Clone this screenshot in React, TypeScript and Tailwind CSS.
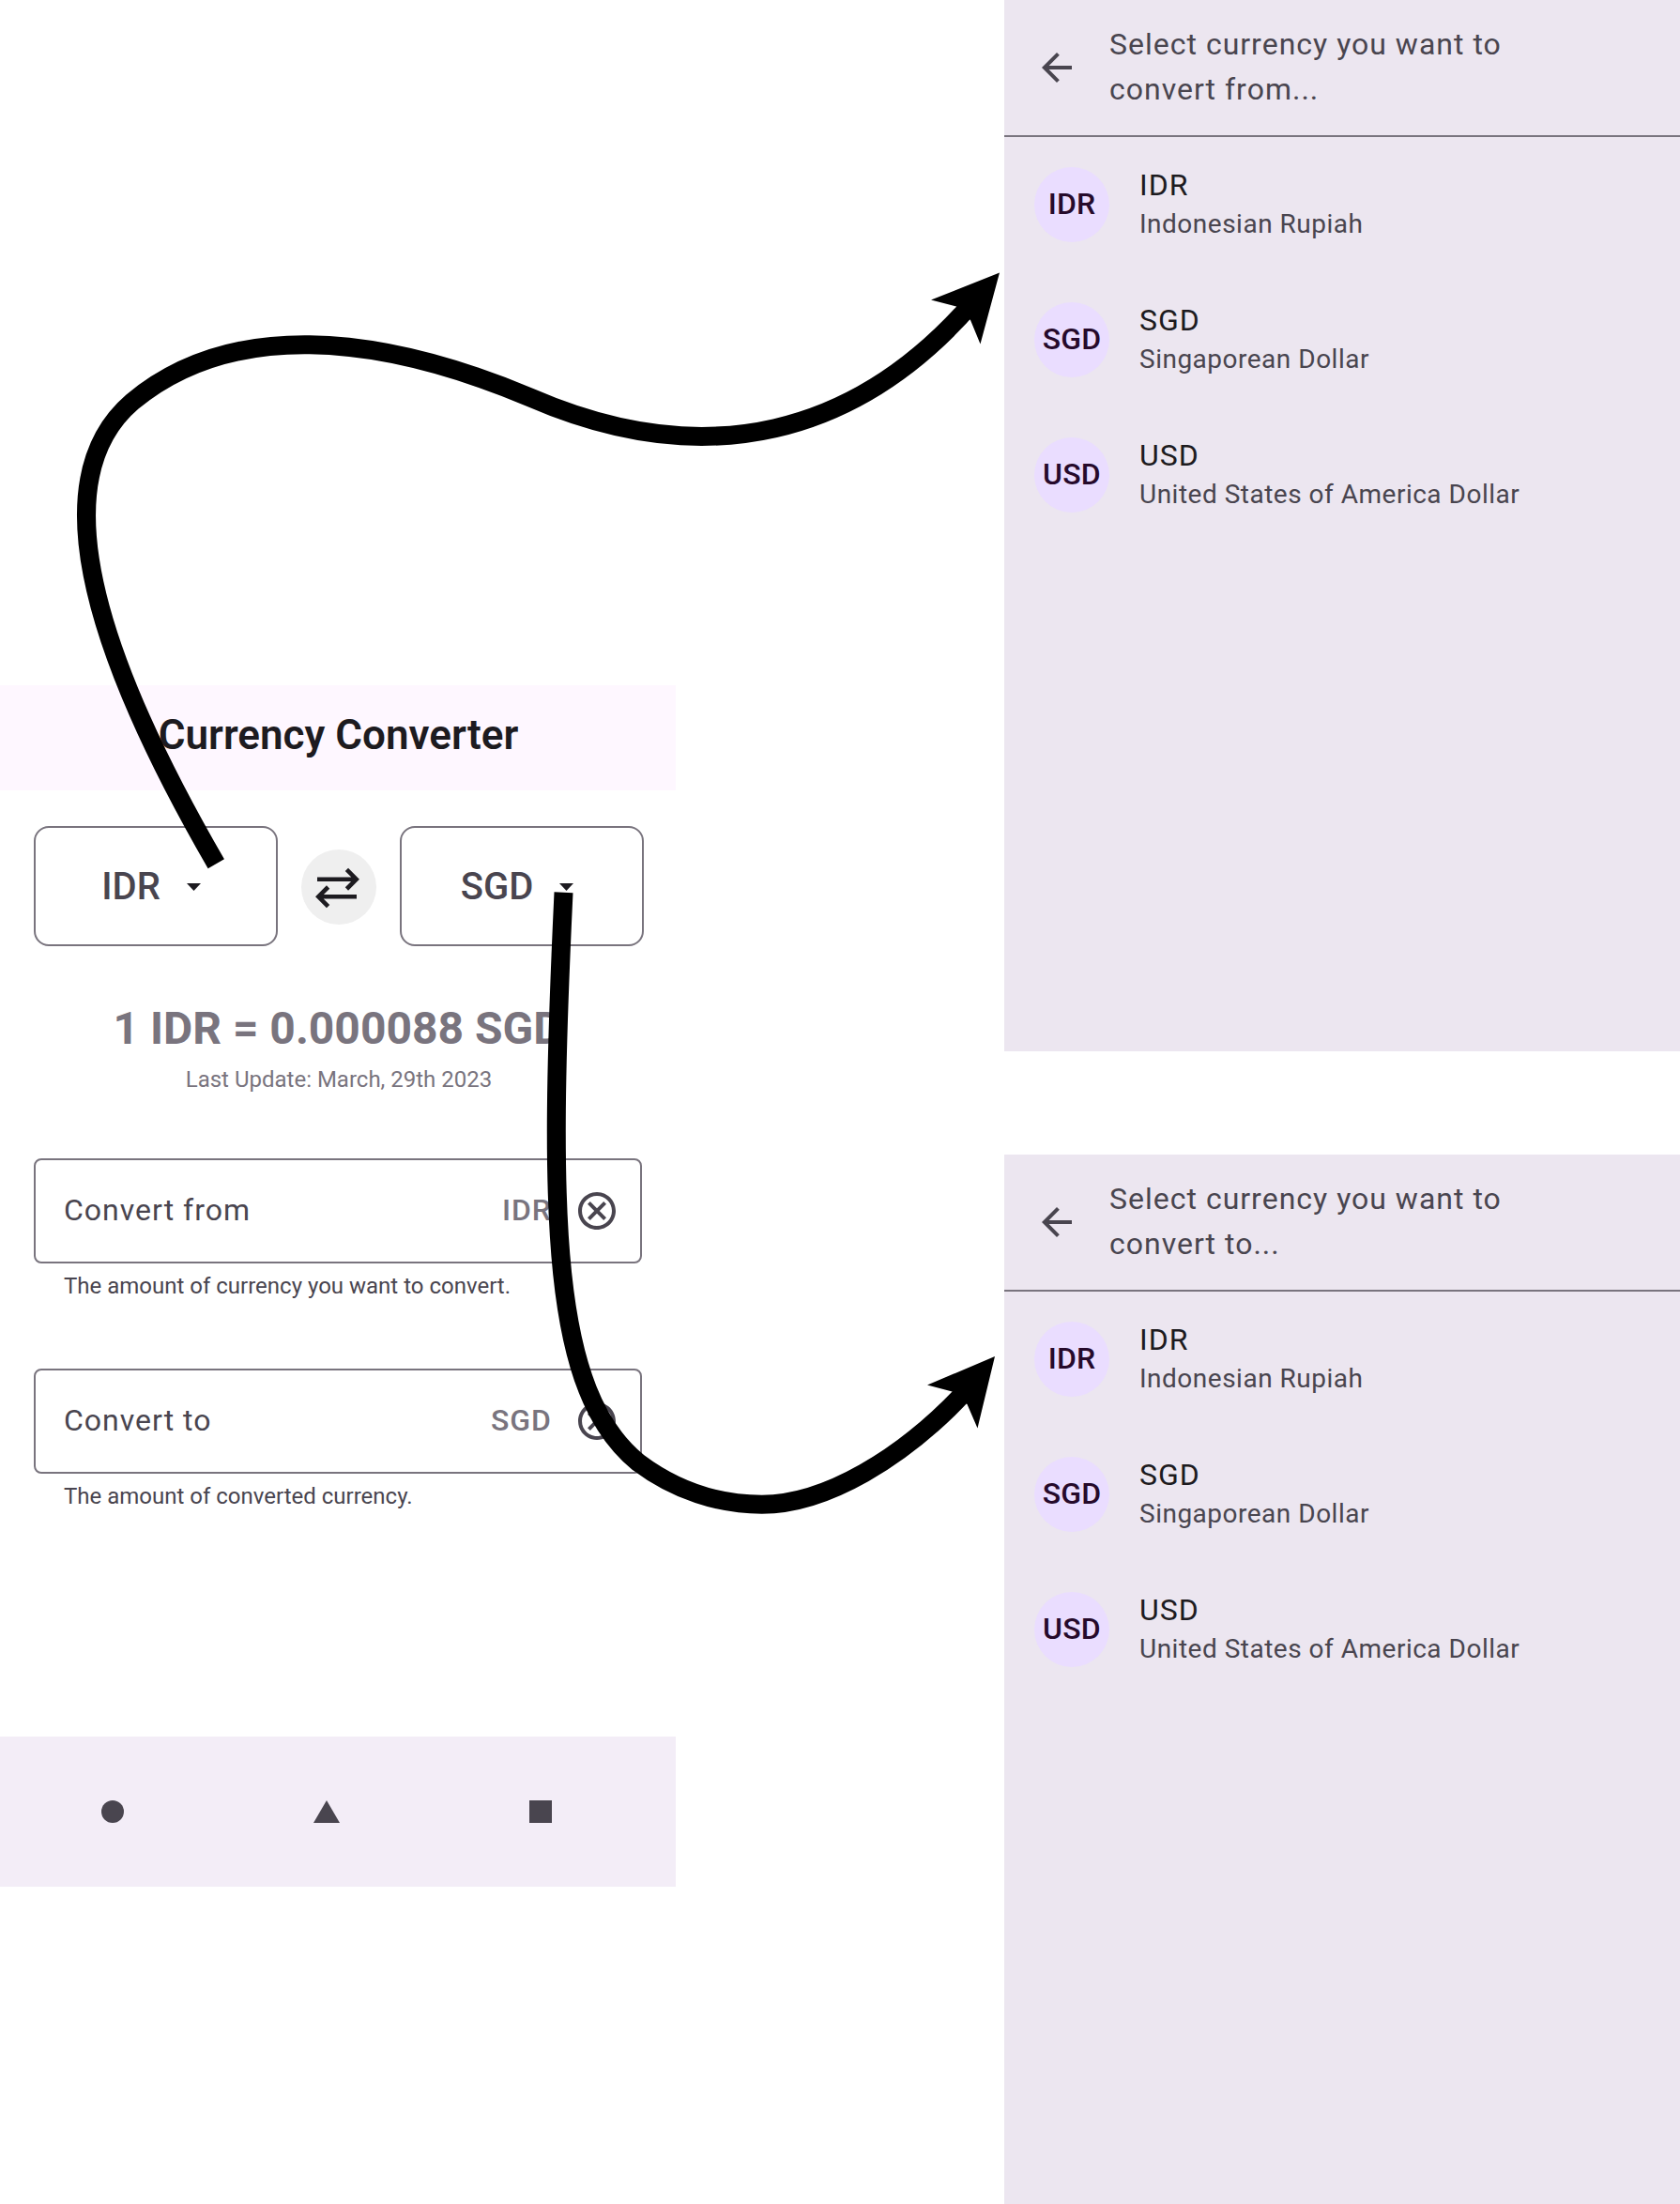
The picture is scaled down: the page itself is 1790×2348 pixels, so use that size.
import React from "react";

const currencies = [
  { code: "IDR", name: "Indonesian Rupiah" },
  { code: "SGD", name: "Singaporean Dollar" },
  { code: "USD", name: "United States of America Dollar" },
];

function CurrencyPicker({ title }: { title: string }) {
  return (
    <section className="h-[1120px] w-[720px] shrink-0 bg-[#ECE6F0]">
      <header className="flex h-[146px] items-center border-b-2 border-[#79747E] pl-8">
        <svg viewBox="0 0 24 24" className="size-12 shrink-0 fill-[#49454F]">
          <path d="M20 11H7.83l5.59-5.59L12 4l-8 8 8 8 1.41-1.41L7.83 13H20v-2z" />
        </svg>
        <h2 className="ml-8 w-[450px] pb-0.5 text-[32px] leading-[48px] tracking-[1px] text-[#49454F]">{title}</h2>
      </header>
      <ul>
        {currencies.map((c) => (
          <li key={c.code} className="flex h-36 items-center gap-8 pl-8">
            <span className="flex size-20 items-center justify-center rounded-full bg-[#EADDFF] pb-0.5 text-[32px] leading-[48px] font-medium tracking-[0.2px] text-[#260A2B]">
              {c.code}
            </span>
            <div className="-mt-0.5">
              <p className="text-[32px] leading-[44px] tracking-[1px] text-[#1D1B20]">{c.code}</p>
              <p className="text-[28px] leading-[40px] tracking-[0.5px] text-[#49454F]">{c.name}</p>
            </div>
          </li>
        ))}
      </ul>
    </section>
  );
}

function CurrencyButton({ code }: { code: string }) {
  return (
    <button className="flex h-32 w-[260px] items-center justify-center gap-7 rounded-2xl border-2 border-[#79747E] pt-0.5 pr-[10px] text-[40px] font-medium text-[#49454F]">
      {code}
      <svg viewBox="0 0 15 8" className="h-2 w-[15px] fill-[#1D1B20]">
        <path d="M0 0h15L7.5 8z" />
      </svg>
    </button>
  );
}

function AmountField({ label, code, hint }: { label: string; code: string; hint: string }) {
  return (
    <div className="w-[648px]">
      <div className="flex h-28 items-center rounded-lg border-2 border-[#79747E] pr-[22px] pl-[30px] text-[32px]">
        <span className="flex-1 pb-0.5 tracking-[1px] text-[#49454F]">{label}</span>
        <span className="pb-0.5 font-medium tracking-[1px] text-[#79747E]">{code}</span>
        <svg viewBox="0 0 24 24" className="ml-6 size-12 fill-[#49454F]">
          <path d="M8.4 17 12 13.4l3.6 3.6 1.4-1.4-3.6-3.6L17 8.400 15.600 7 12 10.600 8.400 7 7 8.400 10.600 12 7 15.600zM12 2C6.47 2 2 6.47 2 12s4.470 10 10 10 10-4.470 10-10S17.530 2 12 2zm0 18c-4.410 0-8-3.590-8-8s3.590-8 8-8 8 3.590 8 8-3.590 8-8 8z" />
        </svg>
      </div>
      <p className="mt-2 pl-8 text-[24px] leading-8 text-[#49454F]">{hint}</p>
    </div>
  );
}

function Converter() {
  return (
    <section className="mt-[730px] flex h-[1280px] w-[720px] flex-col bg-white">
      <header className="flex h-28 items-center justify-center bg-[#FEF7FF] pb-1.5 pl-px">
        <h1 className="text-[44px] leading-[56px] font-semibold text-[#1D1B20]">Currency Converter</h1>
      </header>
      <div className="mt-[38px] flex items-center gap-[25px] pl-9">
        <CurrencyButton code="IDR" />
        <button className="mt-0.5 flex size-20 items-center justify-center rounded-full bg-[#EFEFEF]">
          <svg viewBox="0 0 80 80" className="size-20 fill-none stroke-[#1D1B20] stroke-[4.6]">
            <path d="M17 31.700h41.500M48.400 21.400l10.300 10.300-10.300 10.300M59 50.300H18.500M28.600 40 18.300 50.300 28.600 60.600" />
          </svg>
        </button>
        <CurrencyButton code="SGD" />
      </div>
      <p className="mt-[56px] text-center text-[48px] leading-[64px] font-bold text-[#79747E]">1 IDR = 0.000088 SGD</p>
      <p className="mt-1.5 pl-0.5 text-center text-[24px] leading-8 text-[#79747E]">Last Update: March, 29th 2023</p>
      <div className="mt-[68px] flex flex-col gap-[72px] pl-9">
        <AmountField label="Convert from" code="IDR" hint="The amount of currency you want to convert." />
        <AmountField label="Convert to" code="SGD" hint="The amount of converted currency." />
      </div>
      <nav className="mt-auto flex h-40 items-center bg-[#F3EDF7] pl-[108px]">
        <span className="size-6 rounded-full bg-[#49454F]" />
        <svg viewBox="0 0 28 24" className="ml-[202px] h-6 w-7 fill-[#49454F]">
          <path d="M14 0 28 24H0z" />
        </svg>
        <span className="ml-[202px] size-6 bg-[#49454F]" />
      </nav>
    </section>
  );
}

export default function App() {
  return (
    <main className="relative flex h-[2348px] w-[1790px] justify-between overflow-hidden bg-white font-['Roboto',sans-serif]">
      <Converter />
      <div className="flex flex-col gap-[110px]">
        <CurrencyPicker title="Select currency you want to convert from..." />
        <CurrencyPicker title="Select currency you want to convert to..." />
      </div>
      <svg viewBox="0 0 1790 2348" className="pointer-events-none absolute inset-0 h-full w-full">
        <g className="fill-none stroke-black stroke-20">
          <path d="M230.3 920.3C89 676 50 506 141 428C245 341.500 400 354 565 423.500C755 506 914 461 1034 325" />
          <path d="M600.500 950.700C584 1300 587 1482 680 1558C720 1588 766 1602.700 811.700 1602.700C880 1602.700 962 1553 1027 1484" />
        </g>
        <path d="M1065 290.5 992 319.5 1019 326.5 1034 341 1044.500 366.500z" />
        <path d="M1060 1445 988 1475.500 1014.500 1482.500 1030.500 1496 1041.500 1521.500z" />
      </svg>
    </main>
  );
}
